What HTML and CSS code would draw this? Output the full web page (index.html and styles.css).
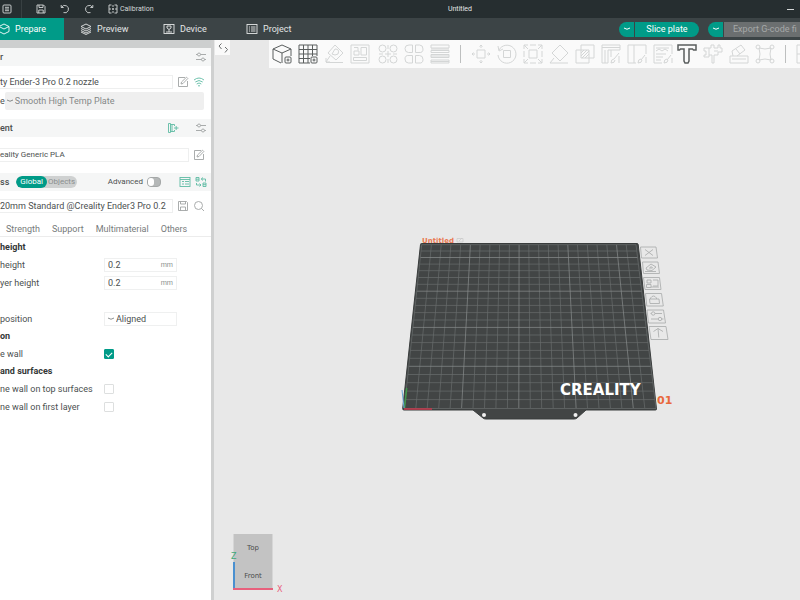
FILE: index.html
```html
<!DOCTYPE html>
<html lang="en">
<head>
<meta charset="utf-8">
<title>Untitled</title>
<link rel="stylesheet" href="styles.css">
</head>
<body>
<header class="titlebar">
  <div class="quick">
    <button class="quick-btn" aria-label="Menu"><svg class="ico10" viewBox="0 0 10 10"><rect x="1" y="1" width="8" height="8" rx="1"/><path d="M3 3.300h4M3 5h4M3 6.700h4"/></svg></button>
    <span class="quick-sep"></span>
    <button class="quick-btn" aria-label="Save"><svg class="ico10" viewBox="0 0 10 10"><path d="M1 1h6.500L9 2.500V9H1zM3 1v2.500h4V1M2.800 9V6h4.400v3"/></svg></button>
    <button class="quick-btn" aria-label="Undo"><svg class="ico10" viewBox="0 0 10 10"><path d="M1.200 1v2.500h2.500M1.500 3.400A3.700 3.700 0 1 1 3.500 8.600"/></svg></button>
    <button class="quick-btn" aria-label="Redo"><svg class="ico10" viewBox="0 0 10 10"><path d="M8.800 1v2.500H6.300M8.500 3.400A3.700 3.700 0 1 0 6.500 8.600"/></svg></button>
    <button class="quick-btn calib"><svg class="ico10" viewBox="0 0 10 10"><path d="M3.500 1H1v8h2.500M6.500 1H9v8H6.500M5 1v2M5 4v2M5 7v2M1 5h2M4 5h2M7 5h2"/></svg>Calibration</button>
  </div>
  <div class="doc-title">Untitled</div>
  <div class="window-ctl"><button class="minimize" aria-label="Minimize"></button></div>
</header>
<nav class="tabs">
  <button class="tab tab-first active"><svg class="ico12" viewBox="0 0 12 12"><path d="M6 1l5 2.500v5L6 11 1 8.500v-5zM1 3.500L6 6l5-2.500"/></svg>Prepare</button>
  <button class="tab tab-wide"><svg class="ico12" viewBox="0 0 12 12"><path d="M6 1l5 2.500L6 6 1 3.500zM1 5.500L6 8l5-2.500M1 7.500L6 10l5-2.500M1 9l5 2.500L11 9"/></svg>Preview</button>
  <button class="tab tab-wide"><svg class="ico12" viewBox="0 0 12 12"><rect x="1" y="1.500" width="10" height="9"/><path d="M3 9h6M6 9V6.500"/><path d="M4 3h4v2L6 6.500 4 5z"/></svg>Device</button>
  <button class="tab"><svg class="ico12" viewBox="0 0 12 12"><rect x="1" y="1.500" width="10" height="9"/><path d="M3 4h1M5 4h4.500M3 6h1M5 6h4.500M3 8h1M5 8h4.500"/></svg>Project</button>
  <span class="spacer"></span>
  <div class="split">
    <button class="split-more" aria-label="Slice options"><svg class="chev" viewBox="0 0 8 4"><path d="M1 1q3 2.500 6 0"/></svg></button><button class="split-main slice">Slice plate</button>
  </div>
  <div class="split export-split">
    <button class="split-more" aria-label="Export options"><svg class="chev" viewBox="0 0 8 4"><path d="M1 1q3 2.500 6 0"/></svg></button><button class="split-main export">Export G-code fi</button>
  </div>
</nav>
<div class="workspace">
<aside class="sidebar">
  <div class="strip"></div>
  <div class="sec-head"><h2>r</h2><button class="icon-btn" aria-label="Printer settings"><svg class="ico12" viewBox="0 0 12 12"><path d="M1 3.500h1.500M5.500 3.500H11M1 8.500h5.500M9.500 8.500H11"/><circle cx="4" cy="3.500" r="1.500"/><circle cx="8" cy="8.500" r="1.500"/></svg></button></div>
  <div class="pick-row first-row">
    <select class="pick" aria-label="Printer"><option>ty Ender-3 Pro 0.2 nozzle</option></select>
    <button class="icon-btn" aria-label="Edit printer"><svg class="ico12" viewBox="0 0 12 12"><path d="M8 1.500H1.500v9h9V5M4 8l.5-2L9.500 1.200l1.300 1.300L6 7.500z"/></svg></button>
    <button class="icon-btn wifi" aria-label="Connection"><svg class="ico12" viewBox="0 0 12 12"><path d="M1 4q5-4 10 0M2.300 6q3.700-3 7.400 0M3.700 8q2.300-2 4.600 0M5 9.800h2"/></svg></button>
  </div>
  <div class="plate-row"><span>e</span><label class="plate-box"><svg class="chev" viewBox="0 0 8 4"><path d="M1 1q3 2.500 6 0"/></svg><select class="pick-plain" aria-label="Plate type"><option>Smooth High Temp Plate</option></select></label></div>
  <div class="sec-head"><h2>ent</h2><button class="icon-btn green add" aria-label="Add filament"><svg class="ico12" viewBox="0 0 12 12"><path d="M1.500 1.500h2v9h-2zM3.500 2.500h4v1.500M3.500 9.500h4V8M5 2.500v7M7 6h4.500M9.200 4v4"/></svg></button><button class="icon-btn" aria-label="Filament settings"><svg class="ico12" viewBox="0 0 12 12"><path d="M1 3.500h1.500M5.500 3.500H11M1 8.500h5.500M9.500 8.500H11"/><circle cx="4" cy="3.500" r="1.500"/><circle cx="8" cy="8.500" r="1.500"/></svg></button></div>
  <div class="pick-row">
    <select class="pick small" aria-label="Filament"><option>eality Generic PLA</option></select>
    <button class="icon-btn" aria-label="Edit filament"><svg class="ico12" viewBox="0 0 12 12"><path d="M8 1.500H1.500v9h9V5M4 8l.5-2L9.500 1.200l1.300 1.300L6 7.500z"/></svg></button>
  </div>
  <div class="sec-head"><h2>ss</h2>
    <div class="scope"><button class="scope-on">Global</button><button class="scope-off">Objects</button></div>
    <span class="spacer"></span>
    <label class="adv" for="adv">Advanced</label><input class="switch" type="checkbox" id="adv">
    <button class="icon-btn green" aria-label="Parameter table"><svg class="ico12" viewBox="0 0 12 12"><rect x="1" y="1.500" width="10" height="9"/><path d="M1 3.500h10M3 5.500h2M6 5.500h4M3 8h2M6 8h4"/></svg></button>
    <button class="icon-btn green" aria-label="Compare"><svg class="ico12" viewBox="0 0 12 12"><path d="M1 1.500h3v3.500H1zM1 3.200h3M8 7h3v3.500H8zM8 8.700h3M6 3h4.500v2.500M8 1.500L6.300 3 8 4.500M1.500 7v2H6M4.500 7.500L6 9l-1.500 1.500"/></svg></button>
  </div>
  <div class="pick-row process-row">
    <select class="pick" aria-label="Process"><option>20mm Standard @Creality Ender3 Pro 0.2</option></select>
    <button class="icon-btn" aria-label="Save process"><svg class="ico12" viewBox="0 0 12 12"><path d="M1.500 1.500h8l1 1v8h-9zM3.500 1.500V4h5V1.500M3.500 10.500V7h5v3.500"/></svg></button>
    <button class="icon-btn" aria-label="Search"><svg class="ico12" viewBox="0 0 12 12"><circle cx="5.500" cy="5.500" r="4"/><path d="M8.500 8.500L11 11"/></svg></button>
  </div>
  <div class="param-tabs"><button>Strength</button><button>Support</button><button>Multimaterial</button><button>Others</button></div>
  <form class="params">
    <h3>height</h3>
    <div class="row"><label for="lh">height</label><span class="num"><input id="lh" type="text" value="0.2"><i>mm</i></span></div>
    <div class="row"><label for="flh">yer height</label><span class="num"><input id="flh" type="text" value="0.2"><i>mm</i></span></div>
    <div class="row"></div>
    <div class="row"><label for="seam">position</label><span class="num"><svg class="chev" viewBox="0 0 8 4"><path d="M1 1q3 2.500 6 0"/></svg><select class="pick-plain" id="seam"><option>Aligned</option></select></span></div>
    <h3>on</h3>
    <div class="row"><label for="pw">e wall</label><input class="check" id="pw" type="checkbox" checked></div>
    <h3>and surfaces</h3>
    <div class="row"><label for="ts">ne wall on top surfaces</label><input class="check" id="ts" type="checkbox"></div>
    <div class="row"><label for="fl">ne wall on first layer</label><input class="check" id="fl" type="checkbox"></div>
  </form>
</aside>
<main class="viewport">
  <svg class="scene" viewBox="214 40 586 560" preserveAspectRatio="xMidYMid slice">
    <defs><clipPath id="bed"><path d="M421.700 244.500H636L656 408.500H404.300z"/></clipPath></defs>
    <path class="plate" d="M421.500 243.500h215.500q1 0 1.200 1L656.500 409q0 1-1 1H586l-9 8q-1 1-3 1h-88q-2 0-3-1l-10-8h-69q-1.500 0-1.300-1.500L420.500 244.500q0-1 1-1z"/>
    <circle class="hole" cx="484" cy="415" r="2"/><circle class="hole" cx="575.500" cy="415" r="2"/>
    <g clip-path="url(#bed)">
      <path class="line" d="M400 399.600h260M400 391.100h260M400 382.700h260M400 374.500h260M400 358.300h260M400 350.400h260M400 342.600h260M400 335h260M400 320h260M400 312.600h260M400 305.400h260M400 298.300h260M400 284.300h260M400 277.500h260M400 270.700h260M400 264.100h260M400 251h260"/>
      <path class="line" d="M431.400 244.700L415.800 408.300M441.200 244.700L427.200 408.300M450.900 244.700L438.700 408.300M460.700 244.700L450.100 408.300M480.100 244.700L473 408.300M489.900 244.700L484.500 408.300M499.600 244.700L495.900 408.300M509.400 244.700L507.400 408.300M528.800 244.700L530.300 408.300M538.600 244.700L541.700 408.300M548.300 244.700L553.200 408.300M558.100 244.700L564.600 408.300M577.500 244.700L587.500 408.300M587.300 244.700L599 408.300M597 244.700L610.400 408.300M606.800 244.700L621.900 408.300M626.200 244.700L644.800 408.300"/>
      <path class="line major" d="M400 366.300h260M400 327.400h260M400 291.200h260M400 257.500h260M470.400 244.700L461.600 408.300M519.100 244.700L518.800 408.300M567.800 244.700L576.100 408.300M616.500 244.700L633.300 408.300"/>
    </g>
    <path class="line" d="M421.700 244.700H636L656 408.500H404.300z"/>
    <path class="axis-x" d="M404 409h28"/><path class="axis-y" d="M404.500 408l2.200-20"/><path class="axis-z" d="M404 408l-2-18"/>
    <text class="brand" x="560" y="395">CREALITY</text>
    <text class="plate-name" x="422" y="243">Untitled</text>
    <path class="mark" d="M457 238.500h6v3.500h-6zM459 241l3-3"/>
    <text class="plate-no" x="657" y="404">01</text>
    <g class="side">
      <path d="M640.500 247h15.500l1.500 11h-16zM645 249.500l8 6M653 249.500l-8 6"/>
      <path d="M642.500 262h15.500l1.500 11.500h-16zM645 271.500h11M646 268l5-4 5 3-4 3.500-5-.5zM649.500 268q2-3 3 0z"/>
      <path d="M643.500 277.500h16l1.500 12h-16zM647 280h4v3h-4zM653 280h5v6h-5M646.500 284.500h4.500v3h-4.500zM651 287h8"/>
      <path d="M645.500 293.500h16l1.800 12.500h-16.500zM649.500 299h9.500l.5 4.500h-9.500zM650.500 299v-1q3-4 6 0v1"/>
      <path d="M647 310h16.500l2 13h-17zM650.500 313.500h1M655 313.500h7M651 319h7M662 319h1.500"/><circle cx="653.200" cy="313.500" r="1.700"/><circle cx="660" cy="319" r="1.700"/>
      <path d="M649 326.500h17l2 13h-17zM658.800 337.500L658 328.500M653.500 331.500l4.500-3 5 3"/>
    </g>
    <path class="cube" d="M233.500 534h39v55h-39z"/>
    <path class="cube-z" d="M234 589v-27"/><path class="cube-x" d="M233 589h40"/>
    <text class="face" x="253" y="550">Top</text><text class="face" x="253" y="578">Front</text>
    <text class="lab-z" x="231" y="559">Z</text><text class="lab-x" x="277" y="592">X</text>
  </svg>
  <button class="collapse" aria-label="Collapse sidebar"><svg class="ico12" viewBox="0 0 12 12"><path d="M4.500 1.500L2 4l2.500 3M8 5l2.500 2.500L8 10.500"/></svg></button>
  <div class="toolbar">
    <button class="tool dark" aria-label="Add object"><svg viewBox="0 0 20 20"><path d="M1 5l9-4 9 4v7M1 5v10l8 4M1 5l9 4 9-4M10 9v10"/><rect x="13" y="13" width="6" height="6" rx="1"/><path d="M14.500 16h3M16 14.500v3"/></svg></button>
    <button class="tool dark" aria-label="Add plate"><svg viewBox="0 0 20 20"><path d="M12 19H1V1h18v11M5.500 1v18M10 1v18M14.500 1v11M1 5.500h18M1 10h18M1 14.500h11"/><rect x="13" y="13" width="6" height="6" rx="1"/><path d="M14.500 16h3M16 14.500v3"/></svg></button>
    <button class="tool" aria-label="Auto orient"><svg viewBox="0 0 20 20"><path d="M11 1l8 8-7 7-8-7zM8 10l3-5q5 0 3 5l-3 1zM2 18.500h17M6 12l-4 6M2 14v4h4"/></svg></button>
    <button class="tool" aria-label="Arrange"><svg viewBox="0 0 20 20"><path d="M1 1h18v18H1zM3.500 13.500h13v3h-13zM4 7h5v4H4zM11 3.500h5.500V11H11zM4 3.500h4v3"/></svg></button>
    <button class="tool group" aria-label="Split to objects"><svg viewBox="0 0 20 20"><circle cx="4.500" cy="4.500" r="3.500"/><circle cx="15.500" cy="4.500" r="3.500"/><circle cx="4.500" cy="15.500" r="3.500"/><circle cx="15.500" cy="15.500" r="3.500"/><path d="M10 1v4M10 7v6M10 15v4M1 10h4M7 10h6M15 10h4"/></svg></button>
    <button class="tool" aria-label="Split to parts"><svg viewBox="0 0 20 20"><path d="M8.500 8.500h-4q-3.500 0-3.500-4 0-3.500 4-3.500h3.500zM11.500 8.500V1h4q3.500 0 3.500 4t-4 3.500zM8.500 11.500V19h-4Q1 19 1 15t4-3.500zM11.500 11.500h4q3.500 0 3.500 4T15 19h-3.500z"/></svg></button>
    <button class="tool" aria-label="Variable layer height"><svg viewBox="0 0 20 20"><path d="M1 1h18v3H1zM1 6.500h18v2H1zM1 10.500h18v3H1zM1 16h18v3H1zM1 5h18M1 12h18M1 17.500h18"/></svg></button>
    <span class="tool-sep"></span>
    <button class="tool" aria-label="Move"><svg viewBox="0 0 20 20"><path d="M6 6h8v8H6zM10 4V1M8.500 2.500L10 1l1.500 1.500M10 16v3M8.500 17.500L10 19l1.500-1.500M4 10H1M2.500 8.500L1 10l1.500 1.500M16 10h3M17.500 8.500L19 10l-1.500 1.500"/></svg></button>
    <button class="tool" aria-label="Rotate"><svg viewBox="0 0 20 20"><path d="M6.500 6.500h7v7h-7zM2 6a9 9 0 1 1-1 5M1 2l1 5 4-2"/></svg></button>
    <button class="tool" aria-label="Scale"><svg viewBox="0 0 20 20"><path d="M6 6h8v8H6zM1 5V1h4M15 1h4v4M1 15v4h4M15 19h4v-4M1 1l4 4M19 1l-4 4M1 19l4-4M19 19l-4-4M7 1h6M7 19h6M1 7v6M19 7v6"/></svg></button>
    <button class="tool" aria-label="Lay on face"><svg viewBox="0 0 20 20"><path d="M11 1l8 8-8 8-8-8zM1 19h18M1 19l4-5"/></svg></button>
    <button class="tool" aria-label="Boolean"><svg viewBox="0 0 20 20"><path d="M6 1h13v13H6zM1 6h13v13H1zM6 9l3-3M6 12l6-6M7 14l7-7M10 14l4-4"/></svg></button>
    <button class="tool" aria-label="Supports"><svg viewBox="0 0 20 20"><path d="M1 1h18v5H7v13H1zM4 6v13M1 3.500h18M10 6v7M18 9l-5 6M13 15q-3 0-3 4 4 0 4-3M18 12v7"/></svg></button>
    <button class="tool" aria-label="Seam"><svg viewBox="0 0 20 20"><path d="M9 19H1V1h18v9M7 1v18M18 11l-4 5M14 15q-3 0-3 4 4 0 4-3M19 13v6"/></svg></button>
    <button class="tool" aria-label="Paint"><svg viewBox="0 0 20 20"><path d="M9 19H1V1h18v9M3 4h13M3 7l3-2 3 2 3-2 3 2M3 10h10M3 13h7M3 16h5M18 11l-4 5M14 15q-3 0-3 4 4 0 4-3M19 14v5"/></svg></button>
    <button class="tool dark text-tool" aria-label="Text"><svg viewBox="0 0 20 20"><path d="M1 1h18v5h-2.500l-1-1H12v12l-1 2H8l-1-2V5H3.500l-1 1H1z"/></svg></button>
    <button class="tool" aria-label="Measure"><svg viewBox="0 0 20 20"><path d="M1 4h7V1h3v3h4V1h2v3h2v4h-4v3h-4v8H9v-8H6v2H1v-2h2V7H1zM6 4v7M11 7h4"/></svg></button>
    <button class="tool" aria-label="Assembly"><svg viewBox="0 0 20 20"><path d="M1 12h18v7H1zM4 12l-1-5 9-6 4 5-8 6M7 5l4 5M3 15h14"/></svg></button>
    <button class="tool" aria-label="Simplify"><svg viewBox="0 0 20 20"><path d="M4 4q6 2 12 0-2 6 0 12-6-2-12 0 2-6 0-12z"/><circle cx="3" cy="3" r="2"/><circle cx="17" cy="3" r="2"/><circle cx="3" cy="17" r="2"/><circle cx="17" cy="17" r="2"/></svg></button>
    <span class="tool-sep"></span>
    <button class="tool" aria-label="Assembly view"><svg viewBox="0 0 20 20"><path d="M1 1h18v18H1zM1 10h18"/></svg></button>
  </div>
</main>
</div>
</body>
</html>
```

FILE: styles.css
```css
* { box-sizing: border-box; }
body {
  margin: 0;
  height: 100vh;
  display: flex;
  flex-direction: column;
  overflow: hidden;
  font-family: Roboto, "Noto Sans", sans-serif;
  font-size: 9px;
  line-height: 12px;
  color: #4c5050;
  background: #fff;
}
button, input, select { font: inherit; color: inherit; border: 0; margin: 0; padding: 0; background: none; border-radius: 0; }
select, input { appearance: none; min-width: 0; outline: 0; }
button { display: flex; align-items: center; white-space: nowrap; }
svg { display: block; fill: none; stroke: currentColor; flex: none; }
h2, h3 { margin: 0; font-size: 9px; }
.ico10 { width: 10px; height: 10px; stroke-width: 0.9; }
.ico12 { width: 12px; height: 12px; stroke-width: 0.9; }
.chev { width: 8px; height: 4px; }
.spacer { flex: 1; }

.titlebar { display: flex; align-items: center; height: 18px; flex: none; background: #262e30; color: #d5d8d8; font-size: 7px; }
.quick { display: flex; align-items: center; gap: 14px; width: 160px; padding-left: 2px; }
.quick-sep { width: 1px; height: 18px; background: #384042; margin-left: -5px; }
.quick-btn.calib { gap: 2px; }
.doc-title { flex: 1; text-align: center; color: #e4e6e6; }
.window-ctl { width: 40px; display: flex; justify-content: flex-end; padding-right: 6px; }
.minimize { width: 7px; height: 1px; background: #d5d8d8; }

.tabs { display: flex; align-items: center; height: 22px; flex: none; background: #3c4446; color: #e4e6e6; }
.tab { height: 100%; gap: 5px; padding: 0 16px; }
.tab-first { width: 64px; padding: 0; }
.tab-first svg { margin-left: -2px; }
.tab-wide { width: 83px; }
.tab.active { background: #009b88; color: #fff; }
.split { display: flex; gap: 1px; height: 15px; border-radius: 8px; overflow: hidden; margin-right: 9px; }
.split-more { flex: none; width: 15px; justify-content: center; background: #009b88; color: #fff; }
.split-main { justify-content: center; }
.slice { width: 64px; background: #009b88; color: #fff; }
.export-split { margin-right: 0; width: 92px; border-radius: 8px 0 0 8px; }
.export { flex: 1; justify-content: flex-start; padding-left: 9px; background: #6b6f70; color: #a5a8a8; }

.workspace { flex: 1; display: flex; min-height: 0; }
.sidebar { width: 214px; flex: none; border-right: 3px solid #cfd0d0; overflow: hidden; background: #fff; }
.strip { height: 8px; background: #cdcfcf; }
.sec-head { display: flex; align-items: center; height: 18px; padding-right: 4px; gap: 4px; background: #f5f6f6; }
.sec-head h2 { font-weight: 500; flex: none; }
.sec-head > h2 + .icon-btn { margin-left: auto; }
.icon-btn { color: #a0a4a4; flex: none; }
.icon-btn.green, .icon-btn.wifi { color: #5fbba4; }
.sec-head .add { margin-right: 12px; }
.pick-row { display: flex; align-items: center; gap: 4px; height: 36px; padding-right: 6px; }
.pick-row.first-row { height: 26px; padding-top: 6px; }
.pick { flex: 1; height: 14px; border: 1px solid #eeefef; border-left: 0; }
.small { font-size: 8px; }
.plate-row { display: flex; align-items: center; height: 27px; padding: 0 7px 9px 0; }
.plate-box { flex: 1; height: 18px; display: flex; align-items: center; gap: 1px; padding-left: 1px; background: #efefef; color: #848888; border-radius: 2px; }
.pick-plain { flex: 1; }
.scope { display: flex; font-size: 8px; height: 12px; border-radius: 6px; background: #cfd1d1; margin-left: 3px; overflow: hidden; color: #8a8e8e; }
.scope-on { background: #009b88; color: #fff; border-radius: 6px; padding: 0 4px; }
.scope-off { padding: 0 2px 0 1px; }
.adv { font-size: 8px; }
.switch { width: 14px; height: 10px; border: 1px solid #a5a8a8; border-radius: 4px; background: #b5b8b8; margin-right: 14px; }
.switch::before { content: ""; display: block; width: 6px; height: 8px; border-radius: 3px; background: #fff; }
.process-row { height: 30px; }
.param-tabs { display: flex; gap: 12px; height: 16px; padding-left: 6px; border-bottom: 1px solid #ececec; color: #777b7b; }
.params { padding-top: 2px; }
.params h3 { height: 17px; line-height: 17px; color: #333737; }
.row { display: flex; align-items: center; height: 18px; }
.row label { width: 104px; flex: none; white-space: nowrap; }
.num { display: flex; align-items: center; width: 73px; height: 14px; padding: 0 3px; border: 1px solid #eff0f0; gap: 1px; }
.num .chev { color: #8d9191; margin-left: -1px; }
.num input { flex: 1; width: 0; }
.num i { font-style: normal; font-size: 7px; color: #8d9191; }
.check { width: 10px; height: 10px; border: 1px solid #dddfdf; border-radius: 1px; }
.check:checked { background: #009b88; border-color: #009b88; }
.check:checked::before { content: ""; display: block; width: 5px; height: 3px; margin: 2px 0 0 1px; border: solid #fff; border-width: 0 0 1px 1px; transform: rotate(-45deg); }

.viewport { flex: 1; min-width: 0; position: relative; overflow: hidden; background: #e8e8e8; }
.scene { position: absolute; inset: 0; width: 100%; height: 100%; }
.scene text { stroke: none; font-family: "DejaVu Sans", sans-serif; }
.plate { fill: #424545; stroke: #393c3c; }
.hole { fill: #f0f0f0; stroke: none; }
.line { stroke: #696d6d; stroke-width: 0.7; }
.line.major { stroke: #8a8e8e; }
.axis-x { stroke: #c8384c; stroke-width: 1.5; }
.axis-y { stroke: #3f9a4c; stroke-width: 1.5; }
.axis-z { stroke: #68a8d8; }
.brand { fill: #fff; font-size: 15px; font-weight: bold; }
.scene .plate-name { fill: #e87850; font-size: 7px; font-weight: bold; }
.mark { stroke: #c8c8c8; stroke-width: 0.7; }
.plate-no { fill: #e8683c; font-size: 11px; font-weight: bold; }
.side { stroke: #aeb0b0; stroke-width: 0.9; }
.cube { fill: #c3c3c3; stroke: none; }
.cube-z { stroke: #4a90d0; stroke-width: 2; }
.cube-x { stroke: #e8607c; stroke-width: 2; }
.face { fill: #4c4c4c; font-size: 7px; text-anchor: middle; }
.lab-z { fill: #3fa878; font-size: 8px; }
.lab-x { fill: #e8607c; font-size: 8px; }
.collapse { position: absolute; left: 1px; top: 0; width: 15px; height: 15px; justify-content: center; background: #fafafa; color: #5c6060; }
.toolbar { position: absolute; left: 55px; right: 0; top: 0; height: 28px; display: flex; align-items: center; gap: 6px; padding-left: 3px; background: #fafafa; overflow: hidden; }
.tool { flex: none; color: #d4d6d6; }
.tool svg { width: 20px; height: 20px; stroke-width: 1; }
.tool.dark { color: #5a5e5e; }
.text-tool { margin-left: -2px; }
.text-tool svg { stroke-width: 1.5; }
.tool.group { margin-left: 2px; }
.tool-sep { flex: none; width: 1px; height: 18px; margin: 0 4px; background: #bdbfbf; }
```
